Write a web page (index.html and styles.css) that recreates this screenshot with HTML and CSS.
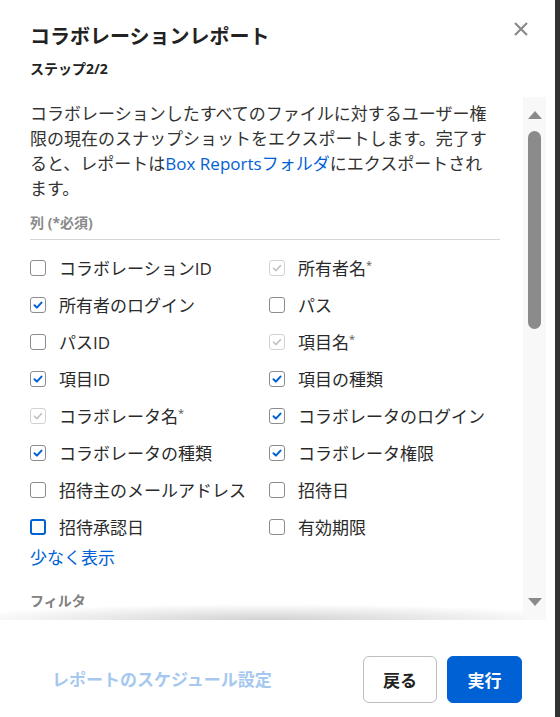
FILE: index.html
```html
<!DOCTYPE html>
<html lang="ja">
<head>
<meta charset="utf-8">
<title>コラボレーションレポート</title>
<link rel="stylesheet" href="styles.css">
</head>
<body>
<div class="modal">
  <header class="head">
    <div class="titles">
      <h1 class="title">コラボレーションレポート</h1>
      <div class="step">ステップ2/2</div>
    </div>
    <button class="close" aria-label="閉じる">
      <svg width="16" height="16" viewBox="0 0 16 16"><path d="M2 2 L14 14 M14 2 L2 14" stroke="#8a8a8a" stroke-width="2.2" stroke-linecap="butt" fill="none"/></svg>
    </button>
  </header>
  <div class="scroll">
    <div class="content">
      <p class="desc">コラボレーションしたすべてのファイルに対するユーザー権限の現在のスナップショットをエクスポートします。完了すると、レポートは<a class="link">Box Reportsフォルダ</a>にエクスポートされます。</p>
      <div class="section-title cols">列 (*必須)</div>
      <div class="grid">
        <label class="item"><span class="cb"></span><span class="lbl">コラボレーションID</span></label>
        <label class="item"><span class="cb disabled"><svg viewBox="0 0 16 16"><path d="M4.5 8.2 L6.9 10.6 L11.5 5.6"/></svg></span><span class="lbl">所有者名<span class="req">*</span></span></label>
        <label class="item"><span class="cb checked"><svg viewBox="0 0 16 16"><path d="M4.5 8.2 L6.9 10.6 L11.5 5.6"/></svg></span><span class="lbl">所有者のログイン</span></label>
        <label class="item"><span class="cb"></span><span class="lbl">パス</span></label>
        <label class="item"><span class="cb"></span><span class="lbl">パスID</span></label>
        <label class="item"><span class="cb disabled"><svg viewBox="0 0 16 16"><path d="M4.5 8.2 L6.9 10.6 L11.5 5.6"/></svg></span><span class="lbl">項目名<span class="req">*</span></span></label>
        <label class="item"><span class="cb checked"><svg viewBox="0 0 16 16"><path d="M4.5 8.2 L6.9 10.6 L11.5 5.6"/></svg></span><span class="lbl">項目ID</span></label>
        <label class="item"><span class="cb checked"><svg viewBox="0 0 16 16"><path d="M4.5 8.2 L6.9 10.6 L11.5 5.6"/></svg></span><span class="lbl">項目の種類</span></label>
        <label class="item"><span class="cb disabled"><svg viewBox="0 0 16 16"><path d="M4.5 8.2 L6.9 10.6 L11.5 5.6"/></svg></span><span class="lbl">コラボレータ名<span class="req">*</span></span></label>
        <label class="item"><span class="cb checked"><svg viewBox="0 0 16 16"><path d="M4.5 8.2 L6.9 10.6 L11.5 5.6"/></svg></span><span class="lbl">コラボレータのログイン</span></label>
        <label class="item"><span class="cb checked"><svg viewBox="0 0 16 16"><path d="M4.5 8.2 L6.9 10.6 L11.5 5.6"/></svg></span><span class="lbl">コラボレータの種類</span></label>
        <label class="item"><span class="cb checked"><svg viewBox="0 0 16 16"><path d="M4.5 8.2 L6.9 10.6 L11.5 5.6"/></svg></span><span class="lbl">コラボレータ権限</span></label>
        <label class="item"><span class="cb"></span><span class="lbl">招待主のメールアドレス</span></label>
        <label class="item"><span class="cb"></span><span class="lbl">招待日</span></label>
        <label class="item"><span class="cb focused"></span><span class="lbl">招待承認日</span></label>
        <label class="item"><span class="cb"></span><span class="lbl">有効期限</span></label>
      </div>
      <a class="more">少なく表示</a>
      <div class="section-title filter">フィルタ</div>
    </div>
    <div class="shadow"></div>
    <div class="scrollbar">
      <div class="arrow up"></div>
      <div class="thumb"></div>
      <div class="arrow down"></div>
    </div>
  </div>
  <footer class="foot">
    <a class="schedule">レポートのスケジュール設定</a>
    <div class="buttons">
      <button class="btn">戻る</button>
      <button class="btn primary">実行</button>
    </div>
  </footer>
</div>
</body>
</html>
```

FILE: styles.css
```css
* { box-sizing: border-box; }
html, body {
  margin: 0;
  padding: 0;
  background: #333333;
  height: 717px;
  overflow: hidden;
}
body {
  font-family: "Open Sans", "Noto Sans CJK JP", sans-serif;
  color: #222222;
}
.modal {
  width: 555px;
  height: 717px;
  background: #ffffff;
  display: flex;
  flex-direction: column;
}
.head {
  height: 97px;
  flex: none;
  display: flex;
  justify-content: space-between;
  align-items: flex-start;
  padding: 0 26px 0 30px;
}
.titles { margin-top: 25px; }
.title {
  margin: 0;
  font-size: 20px;
  line-height: 24px;
  font-weight: 700;
  color: #222222;
}
.step {
  margin-top: 10px;
  font-size: 14px;
  line-height: 20px;
  font-weight: 700;
  color: #222222;
}
.close {
  margin-top: 21px;
  width: 16px;
  height: 16px;
  padding: 0;
  border: 0;
  background: transparent;
  display: block;
}
.close svg { display: block; }

.scroll {
  position: relative;
  height: 523px;
  flex: none;
  display: flex;
  overflow: hidden;
}
.content {
  width: 500px;
  padding: 4px 0 0 30px;
  flex: none;
}
.desc {
  margin: 0;
  width: 465px;
  font-size: 17px;
  line-height: 25px;
  color: #333333;
}
.link { color: #0061d5; }
.section-title {
  font-size: 14px;
  line-height: 20px;
  font-weight: 700;
  color: #8a8a8a;
}
.cols {
  margin-top: 12px;
  padding-bottom: 6px;
  border-bottom: 1px solid #d6d6d6;
}
.grid {
  margin-top: 9px;
  display: grid;
  grid-template-columns: 239px 1fr;
  grid-auto-rows: 37px;
}
.item {
  display: flex;
  align-items: center;
  gap: 13px;
  font-size: 17px;
  color: #2a2a2a;
  white-space: nowrap;
}
.cb {
  width: 16px;
  height: 16px;
  flex: none;
  border: 1px solid #8c8c8c;
  border-radius: 3px;
  background: #fff;
  display: flex;
  align-items: center;
  justify-content: center;
}
.cb svg {
  width: 16px;
  height: 16px;
  flex: none;
}
.cb svg path {
  fill: none;
  stroke-width: 2;
  stroke-linecap: round;
  stroke-linejoin: round;
}
.cb.checked svg path { stroke: #0061d5; }
.cb.disabled { border-color: #d2d2d2; }
.cb.disabled svg path { stroke: #c4c4c4; stroke-width: 1.6; }
.cb.focused {
  border: 2px solid #0061d5;
}
.req {
  font-size: 11px;
  vertical-align: 6px;
  color: #555;
}
.more {
  display: block;
  font-size: 17px;
  line-height: 25px;
  color: #0061d5;
}
.filter {
  margin-top: 21px;
  color: #808080;
}
.shadow {
  position: absolute;
  left: 0;
  right: 20px;
  bottom: 0;
  height: 16px;
  background: radial-gradient(ellipse 60% 100% at 50% 100%, rgba(0,0,0,0.18), rgba(0,0,0,0) 100%);
}
.scrollbar {
  position: relative;
  margin-left: auto;
  margin-right: 9px;
  width: 23px;
  height: 523px;
  background: #f8f8f8;
  display: flex;
  flex-direction: column;
  align-items: center;
  padding: 14px 0;
}
.arrow {
  width: 0;
  height: 0;
  border-left: 7.5px solid transparent;
  border-right: 7.5px solid transparent;
}
.arrow.up { border-bottom: 8px solid #8a8a8a; }
.arrow.down { border-top: 8px solid #8a8a8a; margin-top: auto; }
.thumb {
  margin-top: 12px;
  width: 13px;
  height: 198px;
  border-radius: 7px;
  background: #8b8b8b;
}
.foot {
  flex: 1;
  display: flex;
  align-items: flex-start;
  padding: 36px 33px 0 52px;
}
.schedule {
  margin-top: 11px;
  font-size: 17px;
  line-height: 25px;
  font-weight: 700;
  color: #a6c8ef;
}
.buttons {
  margin-left: auto;
  display: flex;
  gap: 10px;
}
.btn {
  height: 47px;
  width: 74px;
  border: 1px solid #bdbdbd;
  border-radius: 6px;
  background: #ffffff;
  font-family: "Open Sans", "Noto Sans CJK JP", sans-serif;
  font-size: 17px;
  font-weight: 700;
  color: #222222;
  padding: 0;
}
.btn.primary {
  width: 75px;
  background: #0061d5;
  border-color: #0061d5;
  color: #ffffff;
}
```
